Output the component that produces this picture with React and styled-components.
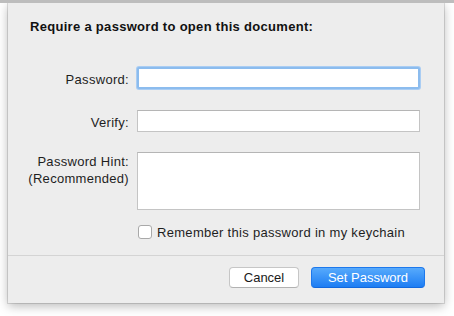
import React from 'react';
import styled, { createGlobalStyle } from 'styled-components';

const GlobalStyle = createGlobalStyle`
  html, body {
    margin: 0;
    padding: 0;
    background: #fff;
  }
  body {
    font-family: "Liberation Sans", Arial, sans-serif;
    font-size: 13px;
    letter-spacing: 0.3px;
    color: #1a1a1a;
  }
`;

const Page = styled.div`
  width: 454px;
  height: 316px;
  position: relative;
  overflow: hidden;
`;

const WindowEdge = styled.div`
  height: 3px;
  background: #bdbdbd;
  position: relative;
  z-index: 2;
`;

const Sheet = styled.div`
  width: 436px;
  margin-left: 8px;
  background: #ededed;
  box-shadow: 0 0 0 1px rgba(0, 0, 0, 0.12), 0 3px 10px rgba(0, 0, 0, 0.28);
  display: flex;
  flex-direction: column;
`;

const Title = styled.div`
  padding: 16px 22px 0;
  line-height: 16px;
  font-weight: bold;
  color: #111;
`;

const Form = styled.div`
  margin-top: 32px;
  display: flex;
  flex-direction: column;
`;

const Row = styled.div`
  display: grid;
  grid-template-columns: 121px 283px;
  column-gap: 8px;
  align-items: start;
  margin-top: ${p => p.$gap || 0}px;
`;

const Label = styled.div`
  text-align: right;
  line-height: 17px;
  padding-top: ${p => p.$pad ?? 4}px;
  color: #1e1e1e;
`;

const Field = styled.input`
  box-sizing: border-box;
  width: 283px;
  height: 22px;
  margin: 0;
  background: #fff;
  border: 1px solid #c4c4c4;
  border-top-color: #b5b5b5;
  outline: none;
  font: inherit;
  ${p => p.$focused && `
    border: 2px solid #8cbcee;
    box-shadow: 0 0 0 1px #aacdf3;
    border-radius: 2px;
  `}
`;

const Hint = styled.textarea`
  box-sizing: border-box;
  width: 283px;
  height: 58px;
  margin: 0;
  background: #fff;
  border: 1px solid #c4c4c4;
  border-top-color: #b5b5b5;
  resize: none;
  outline: none;
  font: inherit;
  display: block;
`;

const CheckLine = styled.label`
  grid-column: 2;
  display: flex;
  align-items: center;
  height: 14px;
  color: #1e1e1e;
`;

const Box = styled.span`
  box-sizing: border-box;
  width: 14px;
  height: 14px;
  margin-left: 1px;
  margin-right: 5px;
  border: 1px solid #a9a9a9;
  border-radius: 3px;
  background: #fff;
  flex: none;
`;

const Footer = styled.div`
  margin-top: 16px;
  border-top: 1px solid #d4d4d4;
  padding: 11px 19px 15px;
  display: flex;
  justify-content: flex-end;
  gap: 12px;
`;

const Button = styled.button`
  box-sizing: border-box;
  width: ${p => p.$w}px;
  height: 21px;
  padding: 0;
  font: inherit;
  border-radius: 4px;
  border: 1px solid ${p => (p.$primary ? '#1d78ec' : '#c6c6c6')};
  border-bottom-color: ${p => (p.$primary ? '#1268dd' : '#b2b2b2')};
  background: ${p => (p.$primary
    ? 'linear-gradient(#57aafc, #1d7df3)'
    : '#fff')};
  color: ${p => (p.$primary ? '#fff' : '#1a1a1a')};
`;

export default function App() {
  return (
    <Page>
      <GlobalStyle />
      <WindowEdge />
      <Sheet>
        <Title>Require a password to open this document:</Title>
        <Form>
          <Row>
            <Label>Password:</Label>
            <Field type="password" $focused />
          </Row>
          <Row $gap={21}>
            <Label>Verify:</Label>
            <Field type="password" />
          </Row>
          <Row $gap={20}>
            <Label $pad={1}>Password Hint:<br />(Recommended)</Label>
            <Hint />
          </Row>
          <Row $gap={15}>
            <CheckLine>
              <Box />
              Remember this password in my keychain
            </CheckLine>
          </Row>
        </Form>
        <Footer>
          <Button $w={70}>Cancel</Button>
          <Button $w={114} $primary>Set Password</Button>
        </Footer>
      </Sheet>
    </Page>
  );
}
